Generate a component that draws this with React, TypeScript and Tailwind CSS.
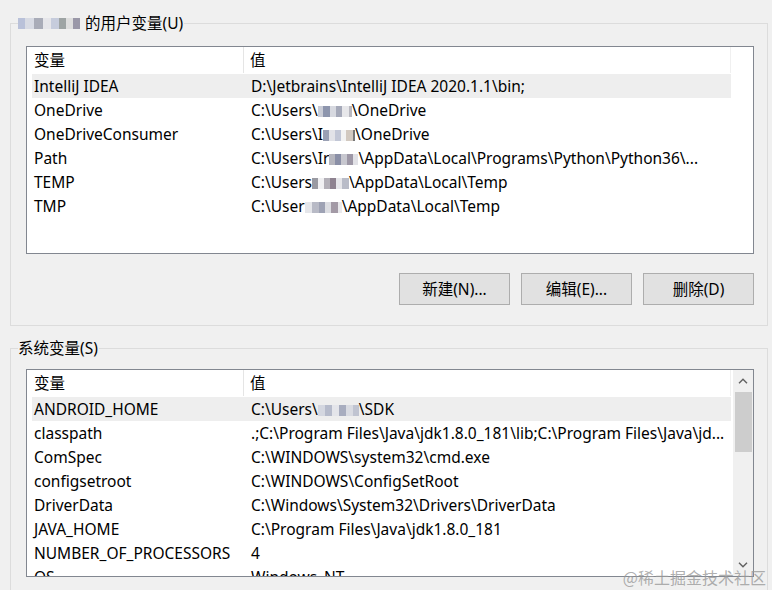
import React from "react";

const FONT = '"Noto Sans", "Noto Sans CJK SC", sans-serif';

type Cell = string | React.ReactNode;
type Row = { name: string; value: Cell; selected?: boolean };

// pixelated blur blocks that hide a user name
function Mosaic({ blocks }: { blocks: [number, string][] }) {
  return (
    <span className="inline-flex h-[16px] items-center align-middle">
      {blocks.map(([w, c], i) => (
        <span key={i} className="inline-block h-[11px]" style={{ width: w, background: c }} />
      ))}
    </span>
  );
}

const userRows: Row[] = [
  { name: "IntelliJ IDEA", value: "D:\\Jetbrains\\IntelliJ IDEA 2020.1.1\\bin;", selected: true },
  {
    name: "OneDrive",
    value: (
      <>
        C:\Users\
        <Mosaic blocks={[[5, "#c9ccd6"], [7, "#8d95ad"], [6, "#d7d9e0"], [6, "#a5a9b9"], [7, "#e7e7ea"], [3, "#b8b8c0"]]} />
        \OneDrive
      </>
    ),
  },
  {
    name: "OneDriveConsumer",
    value: (
      <>
        C:\Users\I
        <Mosaic blocks={[[6, "#9aa0b4"], [6, "#e2e3e8"], [6, "#c2c7d6"], [5, "#f3f3f3"], [7, "#d2c9c0"], [2, "#777"]]} />
        \OneDrive
      </>
    ),
  },
  {
    name: "Path",
    value: (
      <>
        C:\Users\Ir
        <Mosaic blocks={[[6, "#b5b5bd"], [6, "#8a8fa6"], [6, "#c7c7cf"], [6, "#9d97a6"], [5, "#e1e1e6"]]} />
        \AppData\Local\Programs\Python\Python36\...
      </>
    ),
  },
  {
    name: "TEMP",
    value: (
      <>
        C:\Users
        <Mosaic blocks={[[6, "#9a9aa2"], [6, "#f0f0f2"], [6, "#b3b0b8"], [6, "#8e8290"], [6, "#e6e6ea"], [7, "#b9bcc8"]]} />
        \AppData\Local\Temp
      </>
    ),
  },
  {
    name: "TMP",
    value: (
      <>
        C:\User
        <Mosaic blocks={[[7, "#e5e6ea"], [7, "#b8bac6"], [6, "#9ea2b4"], [6, "#dcdde2"], [7, "#a39aa6"], [4, "#e9e9ec"]]} />
        \AppData\Local\Temp
      </>
    ),
  },
];

const sysRows: Row[] = [
  {
    name: "ANDROID_HOME",
    value: (
      <>
        C:\Users\
        <Mosaic blocks={[[7, "#d4d7e0"], [7, "#b6bbcb"], [7, "#e4e5ea"], [7, "#a8adbf"], [7, "#d9dbe2"], [6, "#c0c4d1"]]} />
        \SDK
      </>
    ),
    selected: true,
  },
  { name: "classpath", value: ".;C:\\Program Files\\Java\\jdk1.8.0_181\\lib;C:\\Program Files\\Java\\jd..." },
  { name: "ComSpec", value: "C:\\WINDOWS\\system32\\cmd.exe" },
  { name: "configsetroot", value: "C:\\WINDOWS\\ConfigSetRoot" },
  { name: "DriverData", value: "C:\\Windows\\System32\\Drivers\\DriverData" },
  { name: "JAVA_HOME", value: "C:\\Program Files\\Java\\jdk1.8.0_181" },
  { name: "NUMBER_OF_PROCESSORS", value: "4" },
  { name: "OS", value: "Windows_NT" },
];

function ListView({ rows, height, scroll }: { rows: Row[]; height: number; scroll?: boolean }) {
  return (
    <div className="flex overflow-hidden border border-[#828790] bg-white" style={{ height }}>
      <div className="flex min-w-0 flex-1 flex-col">
        <div className="flex h-[26px] shrink-0 items-center">
          <div className="flex h-full w-[217px] items-center border-r border-[#e5e5e5] pl-[7px]">变量</div>
          <div className="flex h-full w-[487px] items-center border-r border-[#f0f0f0] pl-[6px]">值</div>
        </div>
        <div className="flex flex-col pl-[5px] pt-[1px]">
          {rows.map((r) => (
            <div
              key={r.name}
              className={`flex h-[24px] w-[699px] shrink-0 items-center whitespace-nowrap ${r.selected ? "bg-[#eeeeee]" : ""}`}
            >
              <div className="w-[212px] pl-[2px]">{r.name}</div>
              <div className="pl-[7px]">{r.value}</div>
            </div>
          ))}
        </div>
      </div>
      {scroll && (
        <div className="flex w-[20px] shrink-0 flex-col items-center bg-[#f0f0f0]">
          <div className="flex h-[22px] w-full items-center justify-center">
            <svg width="10" height="6" viewBox="0 0 10 6" fill="none">
              <path d="M1 5.2 5 1.2 9 5.2" stroke="#606060" strokeWidth="1.4" />
            </svg>
          </div>
          <div className="h-[60px] w-[17px] bg-[#cdcdcd]" />
          <div className="flex-1" />
          <div className="flex h-[22px] w-full items-center justify-center">
            <svg width="10" height="6" viewBox="0 0 10 6" fill="none">
              <path d="M1 0.8 5 4.8 9 0.8" stroke="#606060" strokeWidth="1.4" />
            </svg>
          </div>
        </div>
      )}
    </div>
  );
}

function Btn({ children }: { children: React.ReactNode }) {
  return (
    <button
      type="button"
      className="flex h-[32px] w-[111px] items-center justify-center border border-[#adadad] bg-[#e1e1e1] text-black"
    >
      {children}
    </button>
  );
}

export default function App() {
  return (
    <div
      className="relative h-[590px] w-[772px] overflow-hidden bg-[#f0f0f0] pl-[10px] pr-[4px] pt-[13px] text-[15.5px] leading-[20px] text-black"
      style={{ fontFamily: FONT }}
    >
      <fieldset className="border border-[#dcdcdc] pb-[20px] pl-[15px] pr-[13px]">
        <legend className="-ml-[8px] flex items-center pr-[1px]">
          <span className="mr-[5px] inline-flex h-[18px] items-center">
            <Mosaic blocks={[[7, "#b9c1d9"], [9, "#d8dbe4"], [9, "#a9acb8"], [8, "#e6e6ea"], [8, "#c6ccdc"], [7, "#9ea4a4"], [7, "#dedede"], [7, "#9a98a8"]]} />
          </span>
          的用户变量(U)
        </legend>
        <div className="mt-[13px]">
          <ListView rows={userRows} height={208} />
        </div>
        <div className="mt-[19px] flex justify-end gap-[11px]">
          <Btn>新建(N)...</Btn>
          <Btn>编辑(E)...</Btn>
          <Btn>删除(D)</Btn>
        </div>
      </fieldset>

      <fieldset className="mt-[12px] h-[300px] border border-[#dcdcdc] pl-[15px] pr-[13px]">
        <legend className="-ml-[8px] pr-[1px]">系统变量(S)</legend>
        <div className="mt-[11px]">
          <ListView rows={sysRows} height={208} scroll />
        </div>
      </fieldset>

      <div
        className="absolute bottom-[4px] right-[6px] text-[16px] leading-[18px] text-[#9a9a9a]/80"
        style={{ fontFamily: '"Noto Sans CJK SC", sans-serif' }}
      >
        @稀土掘金技术社区
      </div>
    </div>
  );
}
